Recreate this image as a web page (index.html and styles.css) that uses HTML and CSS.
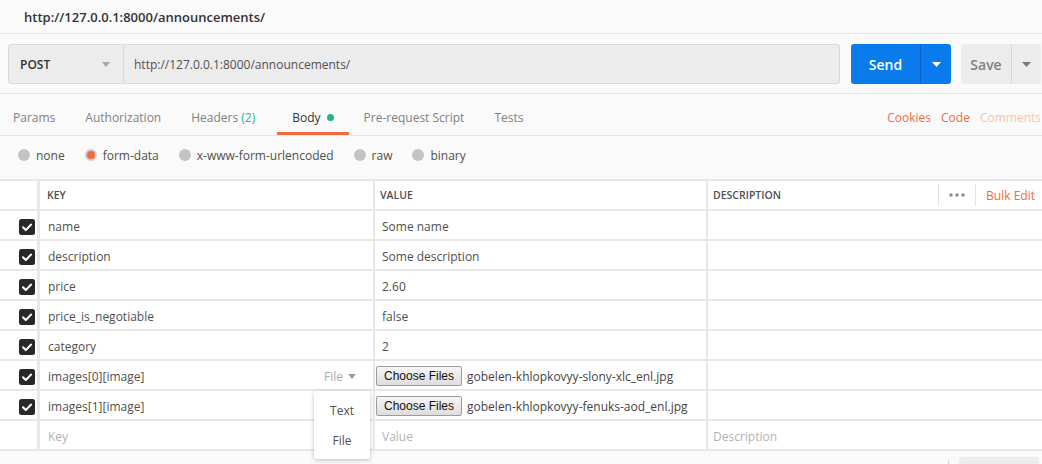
FILE: index.html
```html
<!DOCTYPE html>
<html>
<head>
<meta charset="utf-8">
<link rel="stylesheet" href="styles.css">
</head>
<body>
<header class="titlebar">http://127.0.0.1:8000/announcements/</header>

<div class="reqbar">
  <div class="method">
    <span>POST</span>
    <svg class="caret" width="8" height="5" viewBox="0 0 8 5"><path d="M0 0h8L4 5z" fill="#a6a6a6"/></svg>
  </div>
  <div class="url">http://127.0.0.1:8000/announcements/</div>
  <div class="send">
    <span class="send-label">Send</span>
    <span class="send-caret"><svg width="9" height="5" viewBox="0 0 9 5"><path d="M0 0h9L4.5 5z" fill="#fff"/></svg></span>
  </div>
  <div class="save">
    <span class="save-label">Save</span>
    <span class="save-caret"><svg width="9" height="5" viewBox="0 0 9 5"><path d="M0 0h9L4.5 5z" fill="#7a7a7a"/></svg></span>
  </div>
</div>

<nav class="tabs">
  <div class="tab tab-first">Params</div>
  <div class="tab">Authorization</div>
  <div class="tab tab-headers">Headers&nbsp;<span class="count">(2)</span></div>
  <div class="tab tab-active">Body<span class="dot"></span></div>
  <div class="tab">Pre-request Script</div>
  <div class="tab">Tests</div>
  <div class="tab-links">
    <span class="link">Cookies</span>
    <span class="link">Code</span>
    <span class="link link-faded">Comments</span>
  </div>
</nav>

<div class="bodytypes">
  <label class="radio"><span class="radio-dot"></span>none</label>
  <label class="radio"><span class="radio-dot radio-on"></span>form-data</label>
  <label class="radio"><span class="radio-dot"></span>x-www-form-urlencoded</label>
  <label class="radio"><span class="radio-dot"></span>raw</label>
  <label class="radio"><span class="radio-dot"></span>binary</label>
</div>

<div class="kv">
  <div class="kv-row kv-head">
    <div class="cell c-check"></div>
    <div class="cell c-key">Key</div>
    <div class="cell c-val">Value</div>
    <div class="cell c-desc">
      <span>Description</span>
      <div class="head-actions">
        <span class="vsep"></span>
        <svg class="dots" width="16" height="4" viewBox="0 0 16 4"><circle cx="2" cy="2" r="1.8" fill="#8c8c8c"/><circle cx="8" cy="2" r="1.8" fill="#8c8c8c"/><circle cx="14" cy="2" r="1.8" fill="#8c8c8c"/></svg>
        <span class="vsep"></span>
        <span class="bulk">Bulk Edit</span>
      </div>
    </div>
  </div>

  <div class="kv-row">
    <div class="cell c-check"><svg class="cb" width="16" height="16" viewBox="0 0 16 16"><rect width="16" height="16" rx="2.5" fill="#282828"/><path d="M4 8.3l2.8 2.8L12 5.6" fill="none" stroke="#fff" stroke-width="2.1" stroke-linecap="round" stroke-linejoin="round"/></svg></div>
    <div class="cell c-key">name</div>
    <div class="cell c-val">Some name</div>
    <div class="cell c-desc"></div>
  </div>
  <div class="kv-row">
    <div class="cell c-check"><svg class="cb" width="16" height="16" viewBox="0 0 16 16"><rect width="16" height="16" rx="2.5" fill="#282828"/><path d="M4 8.3l2.8 2.8L12 5.6" fill="none" stroke="#fff" stroke-width="2.1" stroke-linecap="round" stroke-linejoin="round"/></svg></div>
    <div class="cell c-key">description</div>
    <div class="cell c-val">Some description</div>
    <div class="cell c-desc"></div>
  </div>
  <div class="kv-row">
    <div class="cell c-check"><svg class="cb" width="16" height="16" viewBox="0 0 16 16"><rect width="16" height="16" rx="2.5" fill="#282828"/><path d="M4 8.3l2.8 2.8L12 5.6" fill="none" stroke="#fff" stroke-width="2.1" stroke-linecap="round" stroke-linejoin="round"/></svg></div>
    <div class="cell c-key">price</div>
    <div class="cell c-val">2.60</div>
    <div class="cell c-desc"></div>
  </div>
  <div class="kv-row">
    <div class="cell c-check"><svg class="cb" width="16" height="16" viewBox="0 0 16 16"><rect width="16" height="16" rx="2.5" fill="#282828"/><path d="M4 8.3l2.8 2.8L12 5.6" fill="none" stroke="#fff" stroke-width="2.1" stroke-linecap="round" stroke-linejoin="round"/></svg></div>
    <div class="cell c-key">price_is_negotiable</div>
    <div class="cell c-val">false</div>
    <div class="cell c-desc"></div>
  </div>
  <div class="kv-row">
    <div class="cell c-check"><svg class="cb" width="16" height="16" viewBox="0 0 16 16"><rect width="16" height="16" rx="2.5" fill="#282828"/><path d="M4 8.3l2.8 2.8L12 5.6" fill="none" stroke="#fff" stroke-width="2.1" stroke-linecap="round" stroke-linejoin="round"/></svg></div>
    <div class="cell c-key">category</div>
    <div class="cell c-val">2</div>
    <div class="cell c-desc"></div>
  </div>
  <div class="kv-row">
    <div class="cell c-check"><svg class="cb" width="16" height="16" viewBox="0 0 16 16"><rect width="16" height="16" rx="2.5" fill="#282828"/><path d="M4 8.3l2.8 2.8L12 5.6" fill="none" stroke="#fff" stroke-width="2.1" stroke-linecap="round" stroke-linejoin="round"/></svg></div>
    <div class="cell c-key c-key-file">
      <span>images[0][image]</span>
      <span class="filetype">File<svg width="8" height="5" viewBox="0 0 8 5"><path d="M0 0h8L4 5z" fill="#9a9a9a"/></svg></span>
      <div class="menu">
        <div class="menu-item">Text</div>
        <div class="menu-item">File</div>
      </div>
    </div>
    <div class="cell c-val c-file"><span class="filebtn">Choose Files</span><span class="filename">gobelen-khlopkovyy-slony-xlc_enl.jpg</span></div>
    <div class="cell c-desc"></div>
  </div>
  <div class="kv-row">
    <div class="cell c-check"><svg class="cb" width="16" height="16" viewBox="0 0 16 16"><rect width="16" height="16" rx="2.5" fill="#282828"/><path d="M4 8.3l2.8 2.8L12 5.6" fill="none" stroke="#fff" stroke-width="2.1" stroke-linecap="round" stroke-linejoin="round"/></svg></div>
    <div class="cell c-key">images[1][image]</div>
    <div class="cell c-val c-file"><span class="filebtn">Choose Files</span><span class="filename">gobelen-khlopkovyy-fenuks-aod_enl.jpg</span></div>
    <div class="cell c-desc"></div>
  </div>
  <div class="kv-row">
    <div class="cell c-check"></div>
    <div class="cell c-key placeholder">Key</div>
    <div class="cell c-val placeholder">Value</div>
    <div class="cell c-desc placeholder">Description</div>
  </div>
</div>

<div class="footer">
  <span class="footer-sep"></span>
  <span class="footer-btn"></span>
</div>
</body>
</html>
```

FILE: styles.css
```css
* { box-sizing: border-box; }
html, body { margin: 0; }
body {
  width: 1042px;
  height: 464px;
  overflow: hidden;
  background: #fafafa;
  font-family: "Open Sans", "DejaVu Sans", sans-serif;
  font-size: 12px;
  color: #505050;
}

/* title */
.titlebar {
  height: 34px;
  padding: 1px 0 0 24px;
  display: flex;
  align-items: center;
  border-bottom: 1px solid #e6e6e6;
  font-size: 13px;
  font-weight: 600;
  color: #333;
}

/* request bar */
.reqbar {
  display: flex;
  padding: 10px 1px 9px 8px;
  border-bottom: 1px solid #e6e6e6;
}
.method {
  flex: none;
  width: 116px;
  height: 40px;
  display: flex;
  align-items: center;
  justify-content: space-between;
  padding: 0 13px 0 11px;
  background: #ececec;
  border: 1px solid #dadada;
  border-radius: 3px 0 0 3px;
  font-weight: 600;
  color: #333;
}
.url {
  flex: 1;
  height: 40px;
  display: flex;
  align-items: center;
  padding-left: 10px;
  background: #ececec;
  border: 1px solid #dadada;
  border-left: none;
  border-radius: 0 3px 3px 0;
  color: #505050;
}
.send {
  flex: none;
  width: 100px;
  height: 40px;
  margin-left: 11px;
  display: flex;
  background: #097bed;
  border-radius: 3px;
  color: #fff;
  font-size: 14px;
  font-weight: 600;
}
.send-label {
  width: 70px;
  display: flex;
  align-items: center;
  justify-content: center;
  border-right: 1px solid #0765c7;
}
.send-caret, .save-caret {
  flex: 1;
  display: flex;
  align-items: center;
  justify-content: center;
}
.save {
  flex: none;
  width: 80px;
  height: 40px;
  margin-left: 10px;
  display: flex;
  background: #ececec;
  border-radius: 3px;
  color: #808080;
  font-size: 14px;
  font-weight: 600;
}
.save-label {
  width: 51px;
  display: flex;
  align-items: center;
  justify-content: center;
  border-right: 1px solid #d8d8d8;
}

/* tabs */
.tabs {
  height: 42px;
  display: flex;
  border-bottom: 1px solid #e6e6e6;
}
.tab {
  display: flex;
  align-items: center;
  padding: 8px 15px 0;
  border-bottom: 3px solid transparent;
  color: #808080;
  white-space: nowrap;
}
.tab-first { padding-left: 13px; }
.tab-headers { padding-right: 22px; }
.count { color: #26b47f; }
.tab-active {
  color: #333;
  border-bottom-color: #f26b3a;
}
.dot {
  width: 7px;
  height: 7px;
  margin-left: 6px;
  border-radius: 50%;
  background: #26b47f;
}
.tab-links {
  margin-left: auto;
  display: flex;
  align-items: center;
  gap: 10px;
  padding: 8px 1px 3px 0;
}
.link { color: #f26b3a; }
.link-faded { color: #f9c3ac; }

/* body types */
.bodytypes {
  height: 43px;
  display: flex;
  align-items: center;
  padding: 0 0 5px 18px;
}
.radio {
  display: flex;
  align-items: center;
  margin-right: 20px;
  color: #505050;
}
.radio-dot {
  width: 12px;
  height: 12px;
  margin-right: 6px;
  border-radius: 50%;
  background: #c3c3c3;
}
.radio-on {
  background: #f26b3a;
  border: 2px solid #cdcdcd;
}

/* key/value table */
.kv {
  border-top: 2px solid #e8e8e8;
  background: #fff;
}
.kv-row {
  display: flex;
  height: 30px;
  border-bottom: 2px solid #e8e8e8;
}
.cell {
  display: flex;
  align-items: center;
  height: 100%;
  padding-top: 2px;
  white-space: nowrap;
}
.c-check {
  flex: none;
  width: 40px;
  padding: 4px 0 0 19px;
  border-right: 3px solid #e8e8e8;
}
.c-key {
  flex: none;
  width: 335px;
  padding-left: 8px;
  padding-right: 17px;
  border-right: 2px solid #e8e8e8;
}
.c-val {
  flex: none;
  width: 333px;
  padding-left: 7px;
  border-right: 2px solid #e8e8e8;
}
.c-desc {
  flex: 1;
  padding-left: 5px;
}
.kv-head .cell {
  padding-top: 0;
  font-size: 10.5px;
  font-weight: 600;
  text-transform: uppercase;
  color: #505050;
}
.kv-head .c-key { padding-left: 7px; }
.kv-head .c-val { padding-left: 5px; }
.kv-head .c-desc {
  justify-content: space-between;
  padding-right: 7px;
}
.head-actions {
  display: flex;
  align-items: center;
  text-transform: none;
}
.vsep {
  width: 1px;
  height: 22px;
  background: #e2e2e2;
}
.dots { margin: 0 10px; }
.bulk {
  margin-left: 10px;
  font-size: 12px;
  font-weight: 400;
  color: #f26b3a;
}
.placeholder { color: #b3b3b3; }

.c-key-file {
  position: relative;
  justify-content: space-between;
}
.filetype {
  display: flex;
  align-items: center;
  gap: 5px;
  color: #ababab;
}
.menu {
  position: absolute;
  top: 30px;
  right: 3px;
  width: 56px;
  padding: 4px 0;
  background: #fff;
  border-radius: 3px;
  box-shadow: 0 1px 4px rgba(0, 0, 0, 0.25);
  z-index: 5;
}
.menu-item {
  height: 30px;
  display: flex;
  align-items: center;
  justify-content: center;
  color: #505050;
}
.c-file { padding-left: 1px; }
.filebtn {
  height: 20px;
  display: flex;
  align-items: center;
  padding: 0 7px;
  border: 1px solid #9c9c9c;
  border-radius: 2px;
  background: linear-gradient(#f7f7f7, #dddddd);
  font-family: "Liberation Sans", Arial, sans-serif;
  font-size: 12px;
  color: #111;
}
.filename {
  margin-left: 5px;
  color: #444;
}

/* footer */
.footer {
  display: flex;
  justify-content: flex-end;
  align-items: flex-start;
  padding: 6px 3px 0 0;
}
.footer-sep {
  width: 1px;
  height: 20px;
  margin: 3px 10px 0 0;
  background: #d6d6d6;
}
.footer-btn {
  width: 80px;
  height: 30px;
  border-radius: 3px;
  background: #ececec;
}
```
